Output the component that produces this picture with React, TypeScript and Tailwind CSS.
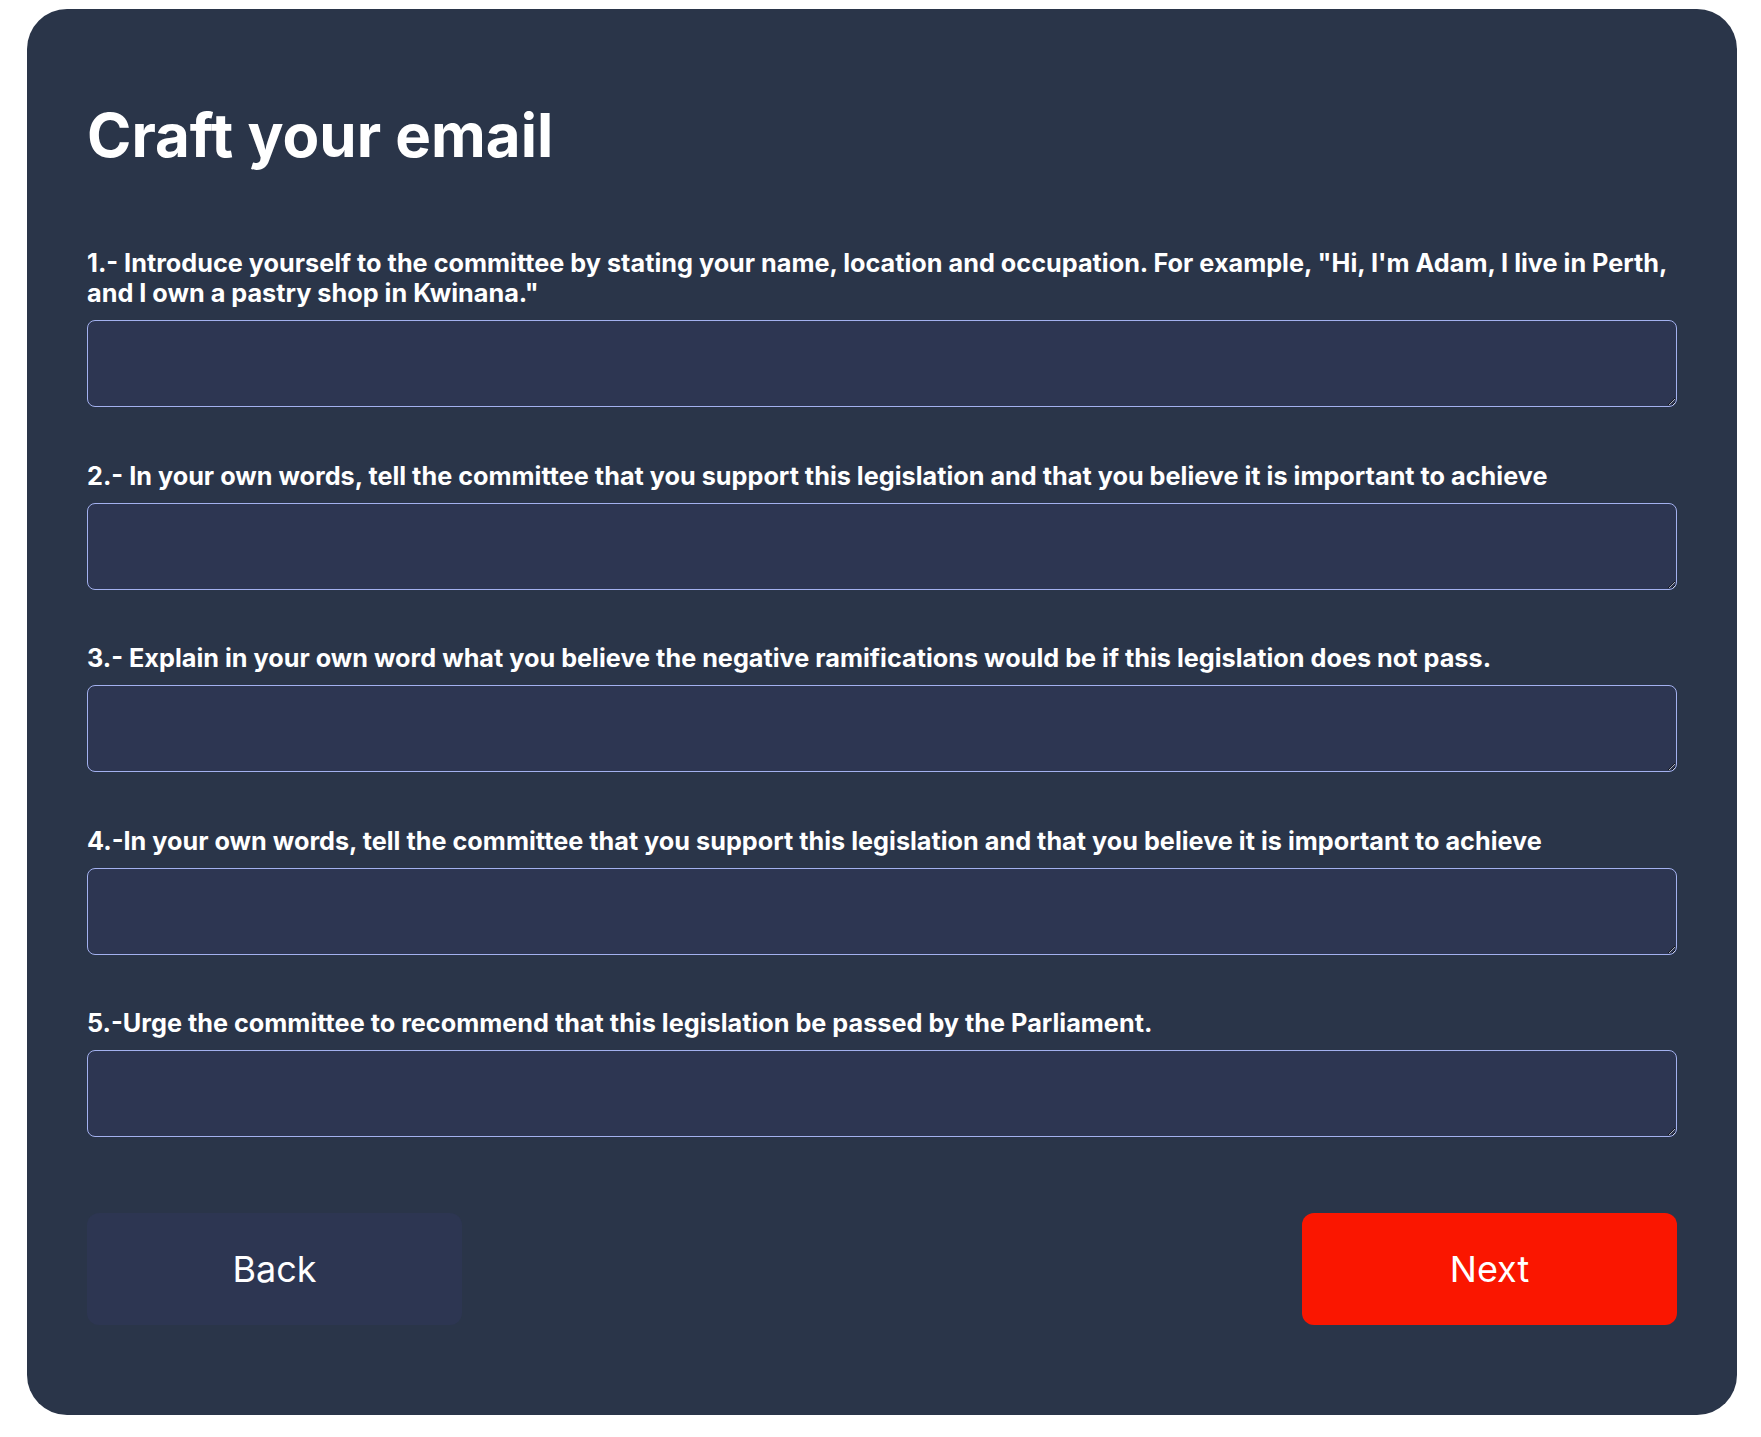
import React from "react";

const questions = [
	'1.- Introduce yourself to the committee by stating your name, location and occupation. For example, "Hi, I\'m Adam, I live in Perth, and I own a pastry shop in Kwinana."',
	"2.- In your own words, tell the committee that you support this legislation and that you believe it is important to achieve",
	"3.- Explain in your own word what you believe the negative ramifications would be if this legislation does not pass.",
	"4.-In your own words, tell the committee that you support this legislation and that you believe it is important to achieve",
	"5.-Urge the committee to recommend that this legislation be passed by the Parliament.",
];

const App: React.FC = () => {
	return (
		<div className="bg-white pl-[27px] pr-[24px] pt-[9px] pb-[22px] font-['Inter',sans-serif] text-white">
			<div className="rounded-[40px] bg-[#2a3549] px-[60px] pt-[96px] pb-[90px]">
				<h1 className="text-[60px] leading-none font-bold">Craft your email</h1>

				<div className="mt-[83px] flex flex-col gap-[53.5px]">
					{questions.map((q, i) => (
						<div key={i} className="flex flex-col">
							<label
								htmlFor={`q-${i}`}
								className="text-[25.25px] leading-[30px] font-bold"
							>
								{q}
							</label>
							<textarea
								id={`q-${i}`}
								className="mt-3 h-[87px] w-full rounded-lg border border-[#a3b1ef] bg-[#2d3652] px-4 py-3 text-xl text-white outline-none"
							/>
						</div>
					))}
				</div>

				<div className="mt-[76px] flex items-center justify-between">
					<button className="h-[112px] w-[375px] rounded-xl bg-[#2d3652] text-4xl">
						Back
					</button>
					<button className="h-[112px] w-[375px] rounded-xl bg-[#fa1600] text-4xl">
						Next
					</button>
				</div>
			</div>
		</div>
	);
};

export default App;
